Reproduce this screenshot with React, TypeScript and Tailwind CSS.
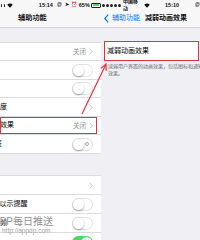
import React from 'react';

// 小图标：右箭头、开关、Wi-Fi
const Chevron = () => (
  <svg viewBox="0 0 4 7" className="w-[4px] h-[7px] shrink-0">
    <path d="M0.6 0.6 L3.3 3.5 L0.6 6.4" fill="none" stroke="#c4c4c9" strokeWidth="0.9" />
  </svg>
);

const Wifi = () => (
  <svg viewBox="0 0 10 8" className="w-[6px] h-[5px]">
    <path d="M5 7.6 L0.4 2.6 A6.8 6.8 0 0 1 9.6 2.6 Z" fill="#111" />
  </svg>
);

const Toggle = ({ on = false, mark = false }: { on?: boolean; mark?: boolean }) => (
  <div
    className={`relative w-[21px] h-[13px] rounded-full shrink-0 ${
      on ? 'bg-[#4cd964]' : 'bg-white border border-[#e0e0e4]'
    }`}
  >
    <div
      className={`absolute w-[11px] h-[11px] rounded-full bg-white shadow-[0_1px_2px_rgba(0,0,0,0.35)] ${
        on ? 'top-[1px] right-[1px]' : 'top-0 left-0'
      }`}
    />
    {mark && (
      <div className="absolute right-[3px] top-[3.5px] w-[4px] h-[4px] rounded-full border-[0.8px] border-[#a9a9ae]" />
    )}
  </div>
);

const Row = ({
  label,
  h,
  children,
  boxed = false,
}: {
  label: string;
  h: string;
  children?: React.ReactNode;
  boxed?: boolean;
}) => (
  <div className={`relative flex items-center pr-[8px] bg-white border-b border-[#dcdce0] ${h}`}>
    <span className="flex-1 whitespace-nowrap text-[7px] text-black">{label}</span>
    {children}
    {boxed && (
      <div className="absolute left-[28px] top-0 bottom-0 w-[97px] border-[1.5px] border-[#e5303c]" />
    )}
  </div>
);

const Off = () => (
  <div className="flex items-center gap-[3px]">
    <span className="text-[6.5px] text-[#8e8e93]">关闭</span>
    <Chevron />
  </div>
);

function LeftPanel() {
  return (
    <div className="w-[101px] shrink-0 h-[240px] overflow-hidden">
      {/* 状态栏 */}
      <div className="h-[10px] flex items-center bg-[#f7f7f8] text-[5.5px] font-semibold text-[#111]">
        <div className="ml-[1px] w-[3px] h-[3px] rounded-full bg-[#222]" />
        <div className="ml-[1.5px] w-[3px] h-[3px] rounded-full bg-[#222]" />
        <div className="ml-[1.5px]">
          <Wifi />
        </div>
        <span className="ml-[26px]">15:14</span>
        <span className="ml-[4px] text-[5px]">@</span>
        <span className="ml-[3px] text-[5px]">➤</span>
        <span className="ml-[2px] text-[5px]">⏰</span>
        <span className="ml-[2px]">65%</span>
        <div className="ml-[1.5px] w-[11px] h-[5px] border-[0.8px] border-[#222] rounded-[1px] p-[0.6px]">
          <div className="w-[6px] h-full bg-[#4cd964]" />
        </div>
        <div className="w-[1px] h-[2px] bg-[#222]" />
      </div>
      {/* 导航栏 */}
      <div className="h-[18px] flex items-center bg-[#f7f7f8] border-b border-[#d2d2d6]">
        <span className="ml-[18px] text-[7.2px] font-semibold text-[#111]">辅助功能</span>
      </div>
      <div className="h-[14px] bg-[#efeff4]" />
      <div className="-ml-[28px] w-[129px] border-t border-[#dcdce0]">
        <Row label="更大字体" h="h-[18px]">
          <Off />
        </Row>
        <Row label="粗体文本" h="h-[19px]">
          <Toggle />
        </Row>
        <Row label="按钮形状" h="h-[18px]">
          <Toggle />
        </Row>
        <Row label="增强对比度" h="h-[19px]">
          <Chevron />
        </Row>
        <Row label="减弱动画效果" h="h-[18px]" boxed>
          <Off />
        </Row>
        <Row label="开/关标签" h="h-[19px]">
          <Toggle mark />
        </Row>
        <div className="h-[22px] bg-[#efeff4] border-b border-[#dcdce0]" />
        <Row label="助听器" h="h-[19px]">
          <Chevron />
        </Row>
        <Row label="LED闪烁以示提醒" h="h-[19px]">
          <Toggle />
        </Row>
        <Row label="单声道音频" h="h-[19px]">
          <Toggle />
        </Row>
        <Row label="电话降噪" h="h-[19px]">
          <Toggle on />
        </Row>
      </div>
    </div>
  );
}

function RightPanel() {
  return (
    <div className="flex-1 h-[240px] bg-[#efeff4] overflow-hidden">
      <div className="h-[10px] flex items-center bg-[#f7f7f8] text-[5.5px] font-semibold text-[#111]">
        <div className="ml-[1px] flex gap-[1px]">
          {[0, 1, 2, 3, 4].map((i) => (
            <div key={i} className="w-[3px] h-[3px] rounded-full bg-[#222]" />
          ))}
        </div>
        <span className="ml-[2px] text-[5px]">中国移动</span>
        <div className="ml-[2px]">
          <Wifi />
        </div>
        <span className="ml-[15px]">15:10</span>
        <span className="ml-[16px] text-[5px]">@</span>
      </div>
      <div className="h-[18px] flex items-center bg-[#f7f7f8] border-b border-[#d2d2d6] whitespace-nowrap">
        <svg viewBox="0 0 5 9" className="ml-[3px] w-[5px] h-[9px]">
          <path d="M4.2 0.6 L0.8 4.5 L4.2 8.4" fill="none" stroke="#007aff" strokeWidth="1.2" />
        </svg>
        <span className="ml-[3px] text-[7px] text-[#007aff]">辅助功能</span>
        <span className="ml-[5px] text-[7px] font-semibold text-[#111]">减弱动画效果</span>
      </div>
      <div className="mt-[13px] ml-[3px] mr-[1px] h-[20px] flex items-center bg-white border-[1.5px] border-[#e5303c]">
        <span className="ml-[2px] text-[7px] text-black whitespace-nowrap">减弱动画效果</span>
      </div>
      <div className="mt-[2px] pl-[7px] text-[5px] leading-[7px] text-[#6d6d72] whitespace-nowrap">
        <div>减弱用户界面的动画效果，包括图标和通知的视差效果。</div>
        <div>效果。</div>
      </div>
    </div>
  );
}

export default function App() {
  return (
    <div className="relative w-[200px] h-[240px] flex overflow-hidden bg-[#efeff4] font-['Liberation_Sans','Noto_Sans_CJK_SC',sans-serif]">
      <LeftPanel />
      <RightPanel />

      {/* 红色箭头标注 */}
      <svg viewBox="0 0 200 240" className="absolute inset-0 w-[200px] h-[240px] pointer-events-none">
        <line x1="82" y1="114" x2="105.6" y2="65" stroke="#e5303c" strokeWidth="1.2" />
        <polyline points="100.8,68.4 106,64 106.2,70.8" fill="none" stroke="#e5303c" strokeWidth="1.2" />
      </svg>

      {/* 水印 */}
      <div className="absolute left-[-7px] top-[216px] flex flex-col pointer-events-none [text-shadow:0_0_1px_#fff]">
        <span className="text-[10px] leading-[11px] text-[#777]/85 whitespace-nowrap">APP每日推送</span>
        <span className="ml-[9px] text-[6.5px] leading-[7px] text-[#888]/85 whitespace-nowrap">http://appdp.com</span>
      </div>
    </div>
  );
}
